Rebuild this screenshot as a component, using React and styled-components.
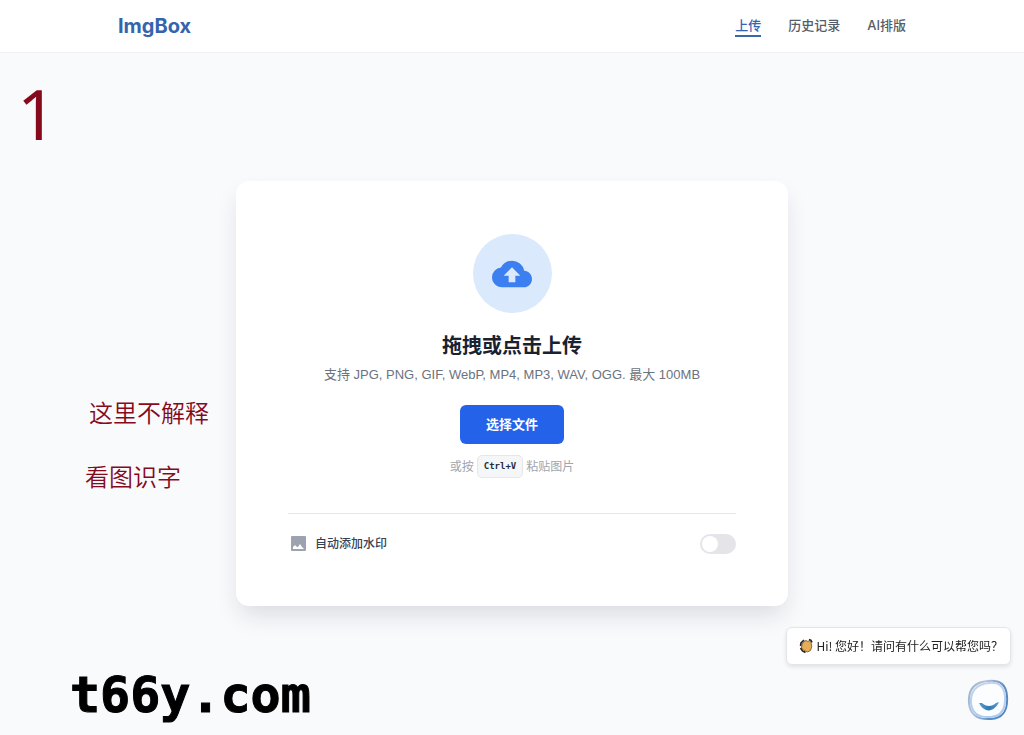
import { useState } from "react";
import styled, { createGlobalStyle } from "styled-components";
import { MdCloudUpload } from "react-icons/md";

const GlobalStyle = createGlobalStyle`
  * {
    box-sizing: border-box;
  }
  body {
    margin: 0;
    background: #f9fafc;
    color: #1f2937;
    font-family: Inter, "Noto Sans CJK SC", sans-serif;
  }
`;

const Page = styled.div`
  min-height: 100vh;
  display: flex;
  flex-direction: column;
`;

const Header = styled.header`
  background: #fff;
  border-bottom: 1px solid #eef0f3;
  padding: 0 24px;
`;

const HeaderInner = styled.div`
  max-width: 788px;
  height: 52px;
  margin: 0 auto;
  display: flex;
  align-items: center;
  justify-content: space-between;
`;

const Logo = styled.a`
  color: #3563ad;
  font-size: 20px;
  font-weight: 700;
  line-height: 24px;
  text-decoration: none;
`;

const Nav = styled.nav`
  display: flex;
  gap: 27px;
`;

const NavLink = styled.a`
  border-bottom: 2px solid ${({ $active }) => ($active ? "#3b68a8" : "transparent")};
  color: ${({ $active }) => ($active ? "#3464b4" : "#565d69")};
  font-size: 13px;
  font-weight: 500;
  line-height: 20px;
  text-decoration: none;
`;

const Main = styled.main`
  flex: 1;
  display: grid;
  grid-template-columns: 1fr minmax(0, 552px) 1fr;
  align-items: start;
`;

const Notes = styled.aside`
  display: flex;
  flex-direction: column;
  color: #850a1c;
  white-space: nowrap;
`;

const Step = styled.div`
  padding: 24px 0 0 17px;
  font-family: "Noto Sans", sans-serif;
  font-size: 70px;
  line-height: 72px;
`;

const NoteList = styled.div`
  padding: 247px 0 0 85px;
  display: flex;
  flex-direction: column;
  gap: 32px;
`;

const Note = styled.p`
  margin: 0;
  padding-left: ${({ $indent }) => ($indent ? "4px" : "0")};
  font-family: "Noto Sans CJK SC", sans-serif;
  font-size: 24px;
  font-weight: 350;
  line-height: 32px;
`;

const Card = styled.section`
  margin-top: 128px;
  padding: 53px 52px 52px;
  border-radius: 13px;
  background: #fff;
  box-shadow: 0 12px 24px -4px rgba(20, 30, 50, 0.14);
`;

const DropZone = styled.div`
  display: flex;
  flex-direction: column;
  align-items: center;
  text-align: center;
`;

const IconCircle = styled.div`
  width: 79px;
  height: 79px;
  border-radius: 50%;
  display: flex;
  align-items: center;
  justify-content: center;
  background: #dbe9fd;
  color: #3c7ff0;
`;

const Title = styled.h1`
  margin: 19px 0 0;
  color: #1a2230;
  font-size: 20px;
  font-weight: 700;
  line-height: 28px;
`;

const Formats = styled.p`
  margin: 5px 0 0;
  color: #6b7280;
  font-family: "Liberation Sans", "Noto Sans CJK SC", sans-serif;
  font-size: 13px;
  line-height: 20px;
`;

const PickButton = styled.button`
  margin-top: 20px;
  padding: 10px 26px;
  border: 0;
  border-radius: 6px;
  background: #2463e9;
  color: #fff;
  font: inherit;
  font-size: 13px;
  font-weight: 700;
  line-height: 19px;
  cursor: pointer;
`;

const Hint = styled.p`
  margin: 11px 0 0;
  display: flex;
  align-items: center;
  gap: 3px;
  color: #a0a5ae;
  font-size: 12px;
  line-height: 20px;
`;

const Key = styled.kbd`
  padding: 0 6px;
  border: 1px solid #e5e7eb;
  border-radius: 5px;
  background: #f4f6f8;
  color: #252d3a;
  font-family: "DejaVu Sans Mono", monospace;
  font-size: 9px;
  font-weight: 700;
  line-height: 21px;
`;

const Options = styled.div`
  margin-top: 35px;
  padding-top: 20px;
  border-top: 1px solid #e5e7eb;
  display: flex;
  align-items: center;
  justify-content: space-between;
`;

const OptionLabel = styled.label`
  display: flex;
  align-items: center;
  gap: 7px;
  color: #374151;
  font-size: 12px;
  font-weight: 500;
  line-height: 20px;

  svg {
    color: #9ca3af;
  }
`;

const Switch = styled.input`
  appearance: none;
  width: 36px;
  height: 20px;
  margin: 0;
  padding: 2px;
  border-radius: 10px;
  display: flex;
  justify-content: ${({ checked }) => (checked ? "flex-end" : "flex-start")};
  background: ${({ checked }) => (checked ? "#2463e9" : "#e4e4e9")};
  cursor: pointer;

  &::before {
    content: "";
    width: 16px;
    height: 16px;
    border-radius: 50%;
    background: #fff;
  }
`;

const Footer = styled.footer`
  padding: 0 0 4px 70px;
  color: #000;
  font-family: "DejaVu Sans Mono", monospace;
  font-size: 50px;
  font-weight: 700;
  line-height: 72px;
  -webkit-text-stroke: 1px #000;
`;

const Chat = styled.div`
  position: fixed;
  right: 13px;
  bottom: 13px;
  display: flex;
  flex-direction: column;
  align-items: flex-end;
  gap: 13px;
`;

const Bubble = styled.div`
  padding: 8px 7px 8px 12px;
  border: 1px solid #e3e5e9;
  border-radius: 6px;
  display: flex;
  align-items: center;
  gap: 3px;
  background: #fff;
  box-shadow: 0 2px 4px rgba(0, 0, 0, 0.1);
  color: #222;
  font-family: "Noto Sans CJK SC", sans-serif;
  font-size: 12px;
  line-height: 20px;
`;

const ChatButton = styled.button`
  width: 44px;
  height: 44px;
  padding: 0;
  border: 0;
  background: none;
  cursor: pointer;
`;

const links = ["上传", "历史记录", "AI排版"];

function PictureIcon() {
  return (
    <svg width="20" height="20" viewBox="0 0 20 20" aria-hidden="true">
      <rect x="3" y="2" width="15" height="15" rx="1" fill="currentColor" />
      <path d="M5 15v-2l2-2 2 2h1l2-3 2 3 2 2z" fill="#fff" />
    </svg>
  );
}

function WaveIcon() {
  return (
    <svg width="14" height="16" viewBox="0 0 14 16" aria-hidden="true">
      <path
        d="M3 6L5 3.5 7 2.5l2 1 1.5-1L12 4.5l.8 4-1.3 4L8.5 14 5 12.5 2.5 10z"
        fill="#e5ad58"
        stroke="#6b4f22"
        strokeWidth="0.8"
        strokeLinejoin="round"
      />
      <path d="M1.5 8L2 5l3-3M10 1.5l2 .8 1 2M1.5 10l2 3 3 1.5" fill="none" stroke="#26221c" strokeWidth="1.6" />
    </svg>
  );
}

function SmileIcon() {
  return (
    <svg width="44" height="44" viewBox="0 0 44 44" aria-hidden="true">
      <defs>
        <linearGradient id="ring" x1="0" y1="0.3" x2="1" y2="0.7">
          <stop offset="0" stopColor="#9fb6cf" />
          <stop offset="0.3" stopColor="#b7bfdc" />
          <stop offset="0.7" stopColor="#5f8fc4" />
          <stop offset="1" stopColor="#5584c0" />
        </linearGradient>
        <linearGradient id="glow" x1="0" y1="0" x2="0" y2="1">
          <stop offset="0" stopColor="#c3d3ea" />
          <stop offset="1" stopColor="#a9cdf3" />
        </linearGradient>
        <linearGradient id="mouth" x1="0" y1="0" x2="1" y2="0">
          <stop offset="0" stopColor="#5b9bd0" />
          <stop offset="0.5" stopColor="#3279b5" />
          <stop offset="1" stopColor="#5b9bd0" />
        </linearGradient>
      </defs>
      <path
        d="M21 3C33 2 39 6 40 18C41 32 37 40 24 41C10 42 3 37 2 25C1 11 8 4 21 3Z"
        fill="#fbfdff"
        stroke="url(#ring)"
        strokeWidth="2"
      />
      <path
        d="M22 5C32 4 37 8 38 18C39 31 35 38 24 39C11 40 5 35 4 25C3 13 10 6 22 5Z"
        fill="none"
        stroke="url(#glow)"
        strokeWidth="2"
      />
      <path d="M12 25c5 10 15 10 20-1l-3 1c-4 4-10 4-14 0z" fill="url(#mouth)" />
    </svg>
  );
}

function App() {
  const [active, setActive] = useState(links[0]);
  const [watermark, setWatermark] = useState(false);

  return (
    <Page>
      <GlobalStyle />
      <Header>
        <HeaderInner>
          <Logo href="#">ImgBox</Logo>
          <Nav>
            {links.map((el) => (
              <NavLink key={el} href="#" $active={el === active} onClick={() => setActive(el)}>
                {el}
              </NavLink>
            ))}
          </Nav>
        </HeaderInner>
      </Header>
      <Main>
        <Notes>
          <Step>1</Step>
          <NoteList>
            <Note $indent>这里不解释</Note>
            <Note>看图识字</Note>
          </NoteList>
        </Notes>
        <Card>
          <DropZone>
            <IconCircle>
              <MdCloudUpload size={40} />
            </IconCircle>
            <Title>拖拽或点击上传</Title>
            <Formats>支持 JPG, PNG, GIF, WebP, MP4, MP3, WAV, OGG. 最大 100MB</Formats>
            <PickButton type="button">选择文件</PickButton>
            <Hint>
              或按 <Key>Ctrl+V</Key> 粘贴图片
            </Hint>
          </DropZone>
          <Options>
            <OptionLabel htmlFor="watermark">
              <PictureIcon />
              自动添加水印
            </OptionLabel>
            <Switch
              id="watermark"
              type="checkbox"
              role="switch"
              checked={watermark}
              onChange={(e) => setWatermark(e.target.checked)}
            />
          </Options>
        </Card>
      </Main>
      <Footer>t66y.com</Footer>
      <Chat>
        <Bubble>
          <WaveIcon />
          Hi! 您好！请问有什么可以帮您吗？
        </Bubble>
        <ChatButton type="button" aria-label="在线客服">
          <SmileIcon />
        </ChatButton>
      </Chat>
    </Page>
  );
}

export default App;
